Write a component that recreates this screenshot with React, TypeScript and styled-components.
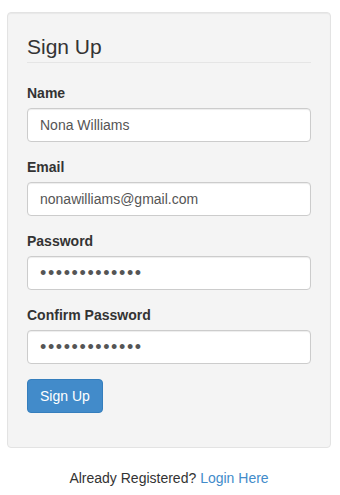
import React, { useState } from "react";
import styled, { createGlobalStyle } from "styled-components";

const GlobalStyle = createGlobalStyle`
  * {
    box-sizing: border-box;
  }
  body {
    margin: 0;
    background: #fff;
    font-family: "Liberation Sans", Arial, Helvetica, sans-serif;
    font-size: 14px;
    line-height: 1.42857143;
    color: #333;
  }
`;

const Page = styled.div`
  padding: 12px 9px 0 7px;
`;

const Well = styled.div`
  background: #f4f4f4;
  border: 1px solid #e3e3e3;
  border-radius: 4px;
  box-shadow: inset 0 1px 1px rgba(0, 0, 0, 0.05);
  padding: 19px;
  margin-bottom: 20px;
`;

const FormStyled = styled.form`
  margin: 0;
`;

const Fieldset = styled.fieldset`
  border: 0;
  margin: 0;
  padding: 0;
  min-width: 0;
`;

const Legend = styled.legend`
  display: block;
  width: 100%;
  padding: 0;
  margin-bottom: 20px;
  font-size: 21px;
  line-height: 30px;
  color: #333;
  border-bottom: 1px solid #e5e5e5;
`;

const FormGroup = styled.div`
  margin-bottom: 15px;
`;

const Label = styled.label`
  display: inline-block;
  margin-bottom: 5px;
  font-weight: bold;
`;

const Input = styled.input<{ $masked?: boolean }>`
  display: block;
  width: 100%;
  height: 34px;
  padding: 6px 12px;
  font-family: inherit;
  font-size: ${(p) => (p.$masked ? "18px" : "14px")};
  letter-spacing: ${(p) => (p.$masked ? "1.6px" : "normal")};
  line-height: 20px;
  color: #555;
  background: #fff;
  border: 1px solid #ccc;
  border-radius: 4px;
  box-shadow: inset 0 1px 1px rgba(0, 0, 0, 0.075);
  outline: none;
`;

const Button = styled.button`
  display: inline-block;
  padding: 6px 12px;
  font-family: inherit;
  font-size: 14px;
  line-height: 1.42857143;
  color: #fff;
  background: #428bca;
  border: 1px solid #357ebd;
  border-radius: 4px;
  cursor: pointer;
`;

const Footer = styled.p`
  margin: 0;
  text-align: center;
`;

const Link = styled.a`
  color: #428bca;
  text-decoration: none;
`;

const fields = [
  { id: "name", label: "Name", type: "text", value: "Nona Williams" },
  { id: "email", label: "Email", type: "email", value: "nonawilliams@gmail.com" },
  { id: "password", label: "Password", type: "password", value: "secretpass123" },
  { id: "confirm", label: "Confirm Password", type: "password", value: "secretpass123" },
];

const App = () => {
  let [values, setValues] = useState<Record<string, string>>(
    Object.fromEntries(fields.map((f) => [f.id, f.value]))
  );

  return (
    <Page>
      <GlobalStyle />
      <Well>
        <FormStyled onSubmit={(e) => e.preventDefault()}>
          <Fieldset>
            <Legend>Sign Up</Legend>
            {fields.map((f) => (
              <FormGroup key={f.id}>
                <Label htmlFor={f.id}>{f.label}</Label>
                <Input
                  id={f.id}
                  type={f.type}
                  $masked={f.type === "password"}
                  value={values[f.id]}
                  onChange={(e) => setValues({ ...values, [f.id]: e.target.value })}
                />
              </FormGroup>
            ))}
            <FormGroup>
              <Button type="submit">Sign Up</Button>
            </FormGroup>
          </Fieldset>
        </FormStyled>
      </Well>
      <Footer>
        Already Registered? <Link href="#">Login Here</Link>
      </Footer>
    </Page>
  );
};

export default App;
